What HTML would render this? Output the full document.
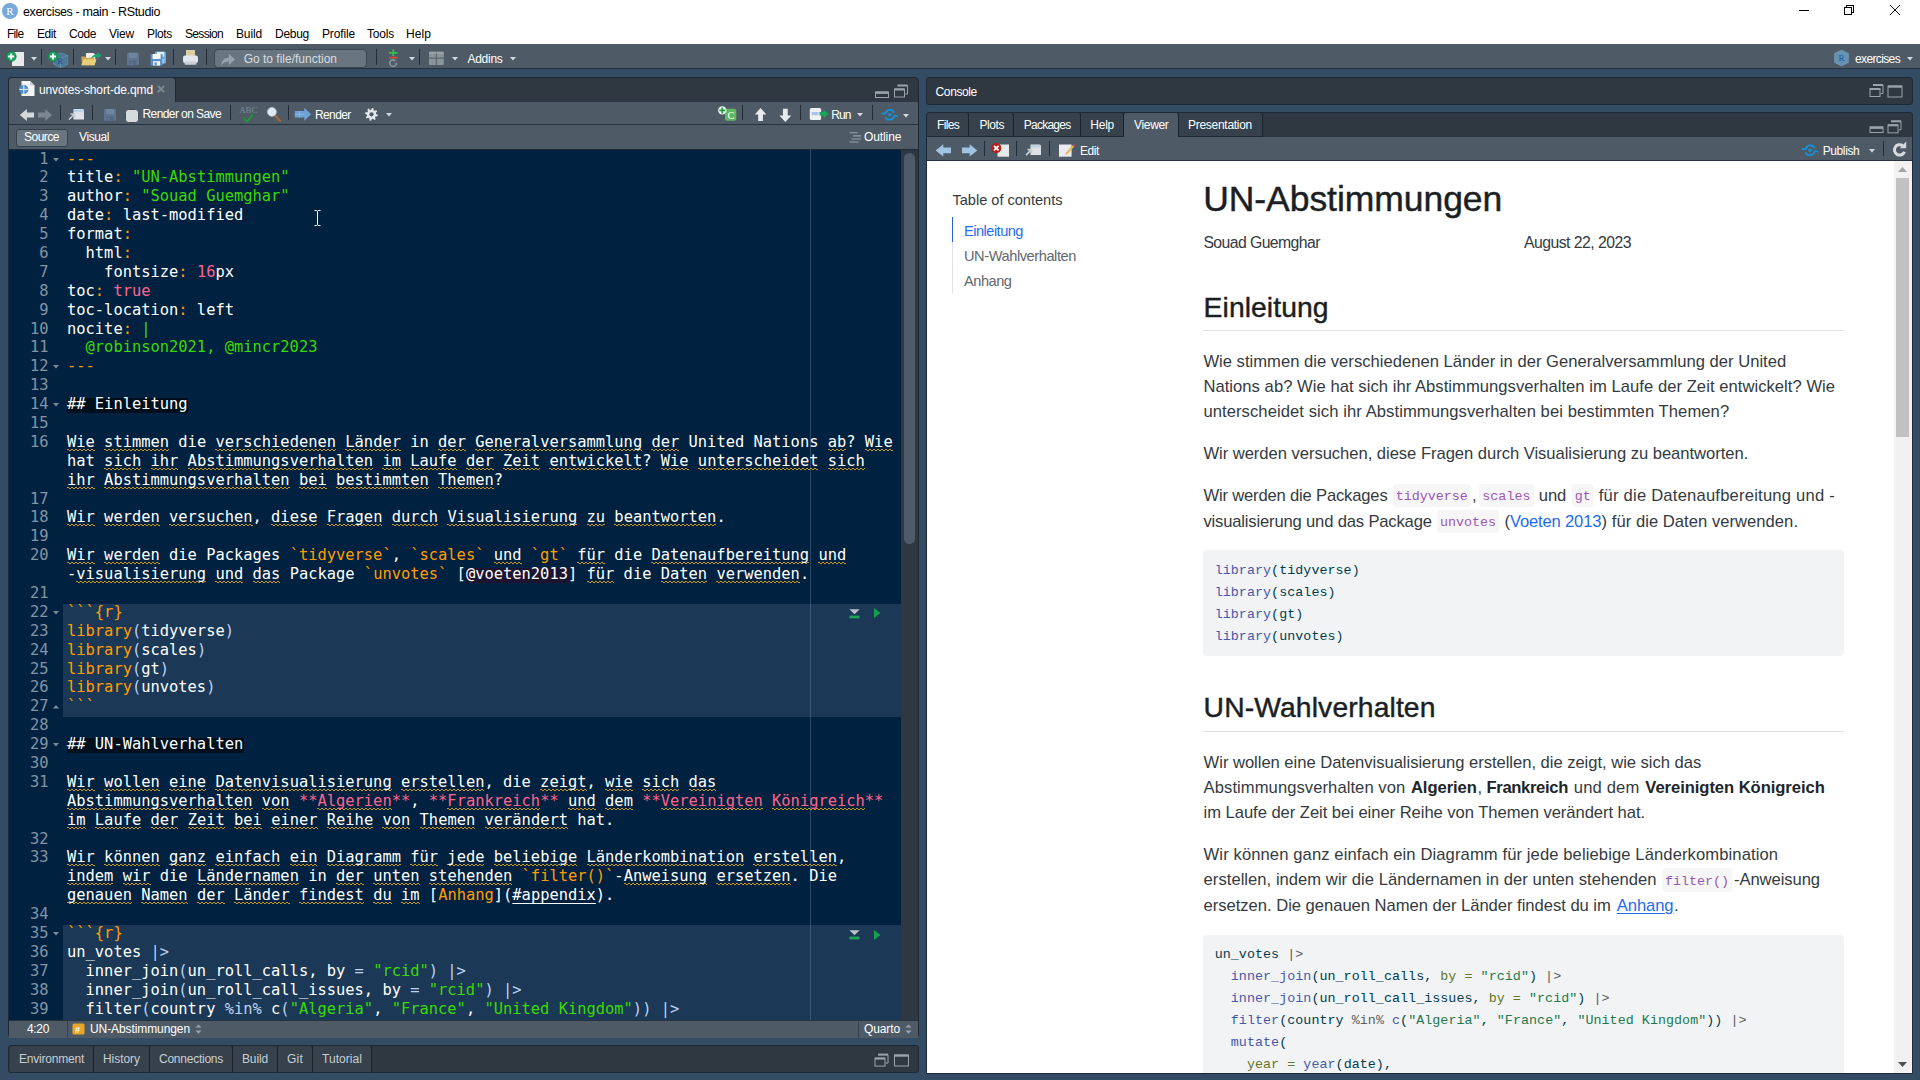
<!DOCTYPE html><html lang="de"><head><meta charset="utf-8"><title>exercises - main - RStudio</title><style>

html,body{margin:0;padding:0}
body{width:1920px;height:1080px;overflow:hidden;position:relative;background:#334b63;font-family:"Liberation Sans",sans-serif}
.a{position:absolute;box-sizing:border-box}
.t{position:absolute;white-space:pre;line-height:20px;height:20px}
.ui{font-family:"Liberation Sans",sans-serif}
.b{font-weight:bold}
.mono{font-family:"DejaVu Sans Mono","Liberation Mono",monospace}
svg{position:absolute;overflow:visible}


.thin{-webkit-text-stroke:0.35px #fff}
.h{-webkit-text-stroke:0.45px #1b1f24}
.pl{position:absolute;white-space:pre;font-size:16.6px;line-height:26px;height:26px;color:#343a40;font-family:"Liberation Sans",sans-serif}
.pl b{color:#212529}
.pl code{font-family:"Liberation Mono",monospace;font-size:13.35px;color:#9753b8;background:#f6f6f6;border-radius:4px;padding:3.5px 4px;letter-spacing:0}
.ic{font-family:"Liberation Mono",monospace;font-size:13.35px;color:#9c55b8;line-height:20px}
.lk{color:#2761e3}.u{text-decoration:underline;text-decoration-thickness:1px;text-underline-offset:2px}
.cl{position:absolute;left:1214.7px;white-space:pre;font-family:"Liberation Mono",monospace;font-size:13.35px;line-height:22px;height:22px;color:#003b4f;letter-spacing:0.05px}
.fn{color:#4758ab}.st{color:#20794d}.at{color:#657422}.opr{color:#5e5e5e}

.ed .row{position:absolute;left:67px;white-space:pre;font-size:15.414px;line-height:18.89px;height:18.89px;color:#fff}
.ed .ln{position:absolute;left:10px;width:38.5px;text-align:right;font-size:15.414px;line-height:18.89px;height:18.89px;color:#8494a4}
.w{color:#fff}.o{color:#ff9d00}.g{color:#3ad900}.p{color:#ff628c}.op{color:#bed2f0}
.hd{color:#fff}
.cite{color:#fff}
.lnk{text-decoration:underline;text-decoration-thickness:1px;text-underline-offset:3px}
.sp{background:linear-gradient(90deg,#c99a1e 0,#c99a1e 2px,transparent 2px,transparent 4px) 0 calc(100% - 1px)/4px 1px repeat-x,linear-gradient(90deg,transparent 0,transparent 2px,#c99a1e 2px,#c99a1e 4px) 0 100%/4px 1px repeat-x}

</style></head><body>
<div class="a " style="left:0px;top:0px;width:1920px;height:44px;background:#ffffff;"></div>
<div class="a" style="left:2px;top:3px;width:16px;height:16px;border-radius:8px;background:#75aadb"></div>
<span class="t ui " style="left:6.2px;top:1.2px;font-size:11px;color:#fff;font-family:'Liberation Serif',serif;">R</span>
<span class="t ui " style="left:23px;top:1.5px;font-size:12.5px;color:#000;letter-spacing:-0.368px;">exercises - main - RStudio</span>
<svg style="left:1790px;top:0" width="130" height="22" viewBox="0 0 130 22"><g stroke="#000" stroke-width="1" fill="none" shape-rendering="crispEdges"><path d="M9 10.5h10"/><path d="M54.5 7.5h7v7h-7z M56.5 7.5v-2h7v7h-2"/></g><path d="M100 5l10 10M110 5l-10 10" stroke="#000" stroke-width="0.95" fill="none"/></svg>
<span class="t ui " style="left:7px;top:23.5px;font-size:12px;color:#000;letter-spacing:-0.759px;">File</span>
<span class="t ui " style="left:37px;top:23.5px;font-size:12px;color:#000;letter-spacing:-0.419px;">Edit</span>
<span class="t ui " style="left:69px;top:23.5px;font-size:12px;color:#000;letter-spacing:-0.422px;">Code</span>
<span class="t ui " style="left:109px;top:23.5px;font-size:12px;color:#000;letter-spacing:-0.198px;">View</span>
<span class="t ui " style="left:147px;top:23.5px;font-size:12px;color:#000;letter-spacing:-0.336px;">Plots</span>
<span class="t ui " style="left:185px;top:23.5px;font-size:12px;color:#000;letter-spacing:-0.670px;">Session</span>
<span class="t ui " style="left:236px;top:23.5px;font-size:12px;color:#000;letter-spacing:-0.137px;">Build</span>
<span class="t ui " style="left:275px;top:23.5px;font-size:12px;color:#000;letter-spacing:-0.272px;">Debug</span>
<span class="t ui " style="left:322px;top:23.5px;font-size:12px;color:#000;letter-spacing:-0.145px;">Profile</span>
<span class="t ui " style="left:367px;top:23.5px;font-size:12px;color:#000;letter-spacing:-0.203px;">Tools</span>
<span class="t ui " style="left:406px;top:23.5px;font-size:12px;color:#000;letter-spacing:0.080px;">Help</span>
<div class="a " style="left:0px;top:44px;width:1920px;height:25px;background:#4e5b67;border-bottom:1px solid #26333f;"></div>
<div class="a " style="left:41px;top:49px;width:1.4px;height:16px;background:#222d37;"></div>
<div class="a " style="left:73px;top:49px;width:1.4px;height:16px;background:#222d37;"></div>
<div class="a " style="left:115px;top:49px;width:1.4px;height:16px;background:#222d37;"></div>
<div class="a " style="left:173px;top:49px;width:1.4px;height:16px;background:#222d37;"></div>
<div class="a " style="left:206px;top:49px;width:1.4px;height:16px;background:#222d37;"></div>
<div class="a " style="left:376px;top:49px;width:1.4px;height:16px;background:#222d37;"></div>
<div class="a " style="left:419px;top:49px;width:1.4px;height:16px;background:#222d37;"></div>
<svg style="left:31px;top:57.2px" width="6" height="3.4" viewBox="0 0 6 3.4"><path d="M0 0h6L3 3.4z" fill="#d4d9de"/></svg>
<svg style="left:105.2px;top:57.2px" width="6" height="3.4" viewBox="0 0 6 3.4"><path d="M0 0h6L3 3.4z" fill="#d4d9de"/></svg>
<svg style="left:409px;top:57.2px" width="6" height="3.4" viewBox="0 0 6 3.4"><path d="M0 0h6L3 3.4z" fill="#d4d9de"/></svg>
<svg style="left:451.7px;top:57.2px" width="6" height="3.4" viewBox="0 0 6 3.4"><path d="M0 0h6L3 3.4z" fill="#d4d9de"/></svg>
<svg style="left:509.5px;top:57.2px" width="6" height="3.4" viewBox="0 0 6 3.4"><path d="M0 0h6L3 3.4z" fill="#d4d9de"/></svg>
<div class="a" style="left:213.5px;top:49px;width:153px;height:18.6px;border-radius:4px;background:#69757f;border:1px solid #3a4650"></div>
<span class="t ui " style="left:243.7px;top:48.7px;font-size:12px;color:#d8dde2;letter-spacing:-0.005px;">Go to file/function</span>
<span class="t ui " style="left:467.5px;top:48.7px;font-size:12px;color:#fff;letter-spacing:-0.282px;">Addins</span>
<span class="t ui " style="left:1855px;top:48.7px;font-size:12px;color:#fff;letter-spacing:-0.632px;">exercises</span>
<svg style="left:1907px;top:57.2px" width="6" height="3.4" viewBox="0 0 6 3.4"><path d="M0 0h6L3 3.4z" fill="#d4d9de"/></svg>
<div class="a" style="left:8px;top:77px;width:911px;height:961px;background:#2f3841;border:1px solid #1c2a38;border-radius:4px"></div>
<div class="a" style="left:8px;top:77px;width:168px;height:25px;background:#4e5b67;border:1px solid #1c2a38;border-bottom:none;border-radius:4px 4px 0 0"></div>
<span class="t ui " style="left:39px;top:80px;font-size:12px;color:#fff;letter-spacing:-0.136px;">unvotes-short-de.qmd</span>
<span class="t ui " style="left:156.6px;top:79.3px;font-size:15px;color:#7e8a94;font-weight:bold;">×</span>
<div class="a " style="left:9px;top:102px;width:909px;height:23px;background:#4e5b67;border-bottom:1px solid #26333f;"></div>
<div class="a " style="left:60px;top:105px;width:1.4px;height:15px;background:#222d37;"></div>
<div class="a " style="left:92px;top:105px;width:1.4px;height:15px;background:#222d37;"></div>
<div class="a " style="left:230px;top:105px;width:1.4px;height:15px;background:#222d37;"></div>
<div class="a " style="left:288px;top:105px;width:1.4px;height:15px;background:#222d37;"></div>
<div class="a " style="left:742px;top:105px;width:1.4px;height:15px;background:#222d37;"></div>
<div class="a " style="left:800px;top:105px;width:1.4px;height:15px;background:#222d37;"></div>
<div class="a " style="left:872px;top:105px;width:1.4px;height:15px;background:#222d37;"></div>
<span class="t ui " style="left:142.5px;top:104px;font-size:12px;color:#fff;letter-spacing:-0.588px;">Render on Save</span>
<div class="a" style="left:125px;top:109.2px;width:13.6px;height:13.4px;border-radius:3.5px;background:#d5dade;border:1px solid #414d58"></div>
<span class="t ui " style="left:315px;top:104.8px;font-size:12px;color:#fff;letter-spacing:-0.626px;">Render</span>
<span class="t ui " style="left:831.3px;top:104.8px;font-size:12px;color:#fff;letter-spacing:-0.905px;">Run</span>
<svg style="left:386.4px;top:113.3px" width="6" height="3.4" viewBox="0 0 6 3.4"><path d="M0 0h6L3 3.4z" fill="#d4d9de"/></svg>
<svg style="left:857.4px;top:113.3px" width="6" height="3.4" viewBox="0 0 6 3.4"><path d="M0 0h6L3 3.4z" fill="#d4d9de"/></svg>
<svg style="left:903.3px;top:114.3px" width="6" height="3.4" viewBox="0 0 6 3.4"><path d="M0 0h6L3 3.4z" fill="#d4d9de"/></svg>
<div class="a " style="left:9px;top:125px;width:909px;height:24px;background:#4e5b67;"></div>
<div class="a" style="left:16px;top:129px;width:51.5px;height:17.5px;border-radius:3px;background:#69757f;border:1px solid #35414c"></div>
<span class="t ui " style="left:24px;top:127px;font-size:12px;color:#fff;letter-spacing:-0.504px;">Source</span>
<span class="t ui " style="left:79px;top:127px;font-size:12px;color:#fff;letter-spacing:-0.411px;">Visual</span>
<span class="t ui " style="left:864px;top:127px;font-size:12px;color:#fff;letter-spacing:-0.103px;">Outline</span>
<div class="a " style="left:9px;top:1020px;width:909px;height:18px;background:#4e5b67;border-top:1px solid #26333f;"></div>
<div class="a " style="left:67px;top:1021px;width:1.4px;height:17px;background:#35414c;"></div>
<div class="a " style="left:858px;top:1021px;width:1.4px;height:17px;background:#35414c;"></div>
<span class="t ui " style="left:27px;top:1019px;font-size:12px;color:#fff;letter-spacing:-0.339px;">4:20</span>
<span class="t ui " style="left:90px;top:1019px;font-size:12px;color:#fff;letter-spacing:-0.091px;">UN-Abstimmungen</span>
<span class="t ui " style="left:864px;top:1019px;font-size:12px;color:#fff;letter-spacing:-0.114px;">Quarto</span>
<div class="a" style="left:8px;top:1045px;width:911px;height:28px;background:#2f3841;border:1px solid #1c2a38;border-radius:3px"></div>
<div class="a" style="left:10px;top:1046px;width:84px;height:26px;background:#36414b;border-right:1px solid #1c2a38;border-radius:3px 3px 0 0"></div>
<span class="t ui " style="left:19px;top:1048.5px;font-size:12px;color:#c8ced4;letter-spacing:-0.215px;">Environment</span>
<div class="a" style="left:93px;top:1046px;width:57px;height:26px;background:#36414b;border-right:1px solid #1c2a38;border-radius:3px 3px 0 0"></div>
<span class="t ui " style="left:103px;top:1048.5px;font-size:12px;color:#c8ced4;letter-spacing:-0.048px;">History</span>
<div class="a" style="left:149px;top:1046px;width:84px;height:26px;background:#36414b;border-right:1px solid #1c2a38;border-radius:3px 3px 0 0"></div>
<span class="t ui " style="left:159px;top:1048.5px;font-size:12px;color:#c8ced4;letter-spacing:-0.246px;">Connections</span>
<div class="a" style="left:232px;top:1046px;width:46px;height:26px;background:#36414b;border-right:1px solid #1c2a38;border-radius:3px 3px 0 0"></div>
<span class="t ui " style="left:242px;top:1048.5px;font-size:12px;color:#c8ced4;letter-spacing:-0.137px;">Build</span>
<div class="a" style="left:277px;top:1046px;width:36px;height:26px;background:#36414b;border-right:1px solid #1c2a38;border-radius:3px 3px 0 0"></div>
<span class="t ui " style="left:287px;top:1048.5px;font-size:12px;color:#c8ced4;letter-spacing:0.222px;">Git</span>
<div class="a" style="left:312px;top:1046px;width:60px;height:26px;background:#36414b;border-right:1px solid #1c2a38;border-radius:3px 3px 0 0"></div>
<span class="t ui " style="left:322px;top:1048.5px;font-size:12px;color:#c8ced4;letter-spacing:0.054px;">Tutorial</span>
<div class="a " style="left:92.8px;top:1046px;width:1.7px;height:27px;background:#18232e;"></div>
<div class="a " style="left:148.8px;top:1046px;width:1.7px;height:27px;background:#18232e;"></div>
<div class="a " style="left:231.8px;top:1046px;width:1.7px;height:27px;background:#18232e;"></div>
<div class="a " style="left:276.8px;top:1046px;width:1.7px;height:27px;background:#18232e;"></div>
<div class="a " style="left:311.8px;top:1046px;width:1.7px;height:27px;background:#18232e;"></div>
<div class="a " style="left:370.8px;top:1046px;width:1.7px;height:27px;background:#18232e;"></div>
<div class="a" style="left:926px;top:77px;width:987px;height:28px;background:#2f3841;border:1px solid #1c2a38;border-radius:3px"></div>
<span class="t ui " style="left:935.6px;top:81.6px;font-size:12px;color:#fff;letter-spacing:-0.390px;">Console</span>
<div class="a" style="left:926px;top:112px;width:987px;height:962px;background:#2f3841;border:1px solid #1c2a38;border-radius:3px"></div>
<div class="a" style="left:927px;top:113px;width:42px;height:24px;background:#36414b;border-right:1px solid #1c2a38;border-bottom:1px solid #1c2a38;border-radius:3px 3px 0 0"></div>
<span class="t ui " style="left:937px;top:115px;font-size:12px;color:#fff;letter-spacing:-0.667px;">Files</span>
<div class="a" style="left:968px;top:113px;width:46px;height:24px;background:#36414b;border-right:1px solid #1c2a38;border-bottom:1px solid #1c2a38;border-radius:3px 3px 0 0"></div>
<span class="t ui " style="left:979.4px;top:115px;font-size:12px;color:#fff;letter-spacing:-0.416px;">Plots</span>
<div class="a" style="left:1013px;top:113px;width:68px;height:24px;background:#36414b;border-right:1px solid #1c2a38;border-bottom:1px solid #1c2a38;border-radius:3px 3px 0 0"></div>
<span class="t ui " style="left:1023.8px;top:115px;font-size:12px;color:#fff;letter-spacing:-0.762px;">Packages</span>
<div class="a" style="left:1080px;top:113px;width:44px;height:24px;background:#36414b;border-right:1px solid #1c2a38;border-bottom:1px solid #1c2a38;border-radius:3px 3px 0 0"></div>
<span class="t ui " style="left:1090.3px;top:115px;font-size:12px;color:#fff;letter-spacing:-0.245px;">Help</span>
<div class="a" style="left:1124px;top:113px;width:55px;height:24px;background:#4e5b67;border-right:1px solid #1c2a38;border-radius:3px 3px 0 0"></div>
<span class="t ui " style="left:1134px;top:115px;font-size:12px;color:#fff;letter-spacing:-0.327px;">Viewer</span>
<div class="a" style="left:1178px;top:113px;width:85px;height:24px;background:#36414b;border-right:1px solid #1c2a38;border-bottom:1px solid #1c2a38;border-radius:3px 3px 0 0"></div>
<span class="t ui " style="left:1188px;top:115px;font-size:12px;color:#fff;letter-spacing:-0.281px;">Presentation</span>
<div class="a " style="left:967.8px;top:114px;width:1.7px;height:23px;background:#18232e;"></div>
<div class="a " style="left:1012.8px;top:114px;width:1.7px;height:23px;background:#18232e;"></div>
<div class="a " style="left:1079.8px;top:114px;width:1.7px;height:23px;background:#18232e;"></div>
<div class="a " style="left:1122.8px;top:114px;width:1.7px;height:23px;background:#18232e;"></div>
<div class="a " style="left:1177.8px;top:114px;width:1.7px;height:23px;background:#18232e;"></div>
<div class="a " style="left:1261.8px;top:114px;width:1.7px;height:23px;background:#18232e;"></div>
<div class="a " style="left:927px;top:137px;width:985px;height:24px;background:#4e5b67;border-bottom:1px solid #26333f;"></div>
<div class="a " style="left:984px;top:141px;width:1.4px;height:15px;background:#222d37;"></div>
<div class="a " style="left:1016px;top:141px;width:1.4px;height:15px;background:#222d37;"></div>
<div class="a " style="left:1049px;top:141px;width:1.4px;height:15px;background:#222d37;"></div>
<div class="a " style="left:1883px;top:141px;width:1.4px;height:15px;background:#222d37;"></div>
<span class="t ui " style="left:1080px;top:140.8px;font-size:12px;color:#fff;letter-spacing:-0.419px;">Edit</span>
<span class="t ui " style="left:1822.7px;top:140.8px;font-size:12px;color:#fff;letter-spacing:-0.394px;">Publish</span>
<svg style="left:1869.3px;top:149.3px" width="6" height="3.4" viewBox="0 0 6 3.4"><path d="M0 0h6L3 3.4z" fill="#d4d9de"/></svg>
<svg style="left:0;top:0" width="1920" height="1080" viewBox="0 0 1920 1080"><rect x="12" y="52" width="12" height="14" fill="#e8eaec"/><circle cx="11.2" cy="56.5" r="5" fill="#18a05a" stroke="#0c7a42" stroke-width="0.6"/><path d="M8.2 56.5h6M11.2 53.5v6" stroke="#fff" stroke-width="2" fill="none"/><path d="M60.5 52.8l7.3 2.8v8.6l-7.3 3.3l-7-3.3v-8.6z" fill="#4b8db3" fill-opacity="0.6" stroke="#6fb0d0" stroke-opacity="0.6" stroke-width="0.7"/><path d="M53.5 55.6l7 2.9l7.3-2.9M60.5 58.5v9" stroke="#7fbbd8" stroke-opacity="0.6" stroke-width="0.6" fill="none"/><text x="57.6" y="64" font-family="Liberation Serif,serif" font-size="7.5" fill="#1b4b8f">R</text><circle cx="53" cy="56.5" r="5" fill="#18a05a" stroke="#0c7a42" stroke-width="0.6"/><path d="M50 56.5h6M53 53.5v6" stroke="#fff" stroke-width="2" fill="none"/><path d="M86 53h7.5l1.8 1.8v8h-9.3z" fill="#f0f0ee"/><path d="M81.2 56.5h4l1 1.3h8.3v7.4h-12.3z" fill="#c9a94b"/><path d="M83.5 59.2h13l-2 6h-13.3z" fill="#e7cf7a"/><path d="M91 58.5c1.5-3.6 4-4.6 6.4-4.3v-2.2l4 3.6l-4 3.6v-2.3c-2.2-.3-4 .2-6.4 1.6z" fill="#1aa875"/><rect x="127" y="52.8" width="12" height="12.4" rx="0.8" fill="#5f7690"/><rect x="129" y="52.8" width="8" height="5.208" fill="#70869d"/><rect x="129.5" y="60.488" width="7" height="4.712" fill="#56697f"/><rect x="131" y="61.728" width="2.2" height="3.472" fill="#5f7690"/><rect x="155" y="51.8" width="11" height="11.6" rx="0.8" fill="#6fb0dc"/><rect x="157" y="51.8" width="7" height="4.872" fill="#e6eef5"/><rect x="157.5" y="58.992" width="6" height="4.408" fill="#e6eef5"/><rect x="159" y="60.152" width="2.2" height="3.248" fill="#6fb0dc"/><rect x="150.6" y="54" width="12" height="11.6" rx="0.8" fill="#5b8fcb"/><rect x="152.6" y="54" width="8" height="4.872" fill="#ffffff"/><rect x="153.1" y="61.192" width="7" height="4.408" fill="#f2f5f8"/><rect x="154.6" y="62.352" width="2.2" height="3.248" fill="#5b8fcb"/><rect x="186" y="50" width="9" height="6.5" fill="#dccfa5"/><rect x="183" y="55.5" width="15" height="7.6" rx="2" fill="#e3e6ea"/><rect x="184.6" y="61.6" width="11.8" height="3.2" rx="0.8" fill="#c9cfd6"/><path d="M221.3 65.6c.4-5.2 3-8 7.6-8.2v-3.6l6.2 5.7l-6.2 5.6v-3.6c-3.4-.1-5.6 1.1-7.6 4.1z" fill="#97a1b0"/><path d="M389 52.8h8.5M393.2 49.6v6.4" stroke="#2fc24a" stroke-width="1.8"/><path d="M389 57.6h8.5" stroke="#d9463c" stroke-width="1.6"/><path d="M396.3 62.6a3.3 3.3 0 1 1 -2.3 -2.6" stroke="#8a949e" stroke-width="1.5" fill="none"/><path d="M393 58.6l2.8 1.4l-2 2.2z" fill="#8a949e"/><rect x="429" y="51.5" width="14.8" height="13.4" rx="1" fill="#8b939b"/><path d="M429 58.1h14.8M436.4 51.5v13.4" stroke="#5d6871" stroke-width="1.3"/><path d="M429 53h14.8" stroke="#a7aeb5" stroke-width="1"/><path d="M1841.5 50l7 3.4v9l-7 3.6l-7-3.6v-9z" fill="#6aa3c4" fill-opacity="0.8" stroke="#8fc0e0" stroke-opacity="0.5" stroke-width="0.6"/><path d="M1841.5 58v8" stroke="#4f8fb0" stroke-width="0.6"/><text x="1838.6" y="61" font-family="Liberation Serif,serif" font-size="9" fill="#1d5a9c">R</text><path d="M21.5 81h8.6l4.4 4.4v10.7h-13z" fill="#f4f5f6"/><path d="M30.1 81v4.4h4.4z" fill="#c9ced3"/><circle cx="23.8" cy="89.4" r="4.6" fill="#4f8fd0"/><path d="M19.2 89.4h9.2M23.8 84.8v9.2" stroke="#e8f0f8" stroke-width="1"/><path d="M19.8 115L26.9 109V112.4H34V117.6H26.9V121z" fill="#d5d9dd"/><path d="M52.2 115L45.1 109V112.4H38V117.6H45.1V121z" fill="#7b8690"/><path d="M73.5 109h9a1.5 1.5 0 0 1 1.5 1.5v9h-10.5z" fill="#dfe3e7"/><rect x="74" y="109.6" width="9.5" height="2.2" fill="#b9cfe6"/><path d="M69 119.5l5.5-5.5m-4 0h4v4" stroke="#c9ced4" stroke-width="1.6" fill="none"/><rect x="104" y="109" width="12" height="11.8" rx="0.8" fill="#5f7690"/><rect x="106" y="109" width="8" height="4.956" fill="#70869d"/><rect x="106.5" y="116.316" width="7" height="4.484" fill="#56697f"/><rect x="108" y="117.496" width="2.2" height="3.304" fill="#5f7690"/><text x="239.2" y="112.6" font-family="Liberation Serif,serif" font-size="8.2" fill="#7f8a94" textLength="18.2" lengthAdjust="spacingAndGlyphs">ABC</text><path d="M244 118.2l3 3.4l5.8-7" stroke="#1a9a3a" stroke-width="1.7" fill="none"/><path d="M275 115.2l5.2 5.8" stroke="#a8672f" stroke-width="2.2" stroke-linecap="round"/><circle cx="271.9" cy="111.9" r="4.4" fill="#dde9f3" stroke="#b8c6d2" stroke-width="0.9"/><path d="M294.8 111h9.5v-3.2l6.8 6.5l-6.8 6.5v-3.2h-9.5z" fill="#6fa0d6"/><path d="M294.8 114.3h9.5M299.5 111v6.6" stroke="#9fc0e6" stroke-width="0.6"/><path d="M377.88 114.79L377.58 116.29L375.60 116.38L374.99 117.30L375.67 119.16L374.39 120.01L372.93 118.67L371.85 118.89L371.01 120.68L369.51 120.38L369.42 118.40L368.50 117.79L366.64 118.47L365.79 117.19L367.13 115.73L366.91 114.65L365.12 113.81L365.42 112.31L367.40 112.22L368.01 111.30L367.33 109.44L368.61 108.59L370.07 109.93L371.15 109.71L371.99 107.92L373.49 108.22L373.58 110.20L374.50 110.81L376.36 110.13L377.21 111.41L375.87 112.87L376.09 113.95z" fill="#e4e7ea" fill-rule="evenodd"/><circle cx="371.5" cy="114.3" r="2.1" fill="#4e5b67"/><rect x="725" y="108.8" width="11.3" height="12" rx="2" fill="#5fb760"/><text x="727.6" y="118.8" font-family="Liberation Serif,serif" font-size="10.5" fill="#fff">C</text><circle cx="722.3" cy="110.4" r="4.2" fill="#f2f4f5"/><path d="M719.3 110.4h6M722.3 107.4v6" stroke="#1f9e3a" stroke-width="1.8"/><path d="M760.55 107.9L766.3 114.45H762.95V121H758.15V114.45H754.8z" fill="#e8eaec"/><path d="M785.35 122L791.3 115.4H787.75V108.8H782.95V115.4H779.4z" fill="#e8eaec"/><rect x="809.8" y="107.9" width="11.3" height="12.2" rx="1.5" fill="#eef0f2"/><rect x="811.5" y="112" width="7" height="3.2" fill="#a9c3ee"/><path d="M819.5 112h4v-2.6l5.2 4.4l-5.2 4.4v-2.6h-4z" fill="#18a558"/><g transform="translate(881.5 108.3)" fill="none" stroke="#1a8fd6" stroke-width="1.9" stroke-linecap="round"><path d="M0.8 5.2h3.2M4 5.2a4.6 4.6 0 0 1 8.4 -1.6"/><path d="M15.6 7.6h-2.6M12.6 7.6a4.6 4.6 0 0 1 -8.4 1.8"/><circle cx="8.3" cy="6.5" r="1.7" fill="#1a8fd6" stroke="none"/></g><path d="M849.5 132.8h8M853 135.9h8M851.5 139h9.5M849.5 142h9" stroke="#9aa3ab" stroke-width="1.1"/><path d="M853 138.4h8" stroke="#7d8790" stroke-width="0"/><rect x="875.5" y="92" width="13" height="5.5" stroke="#9aa3ab" stroke-width="1" fill="none"/><path d="M875.5 92.7h13" stroke="#9aa3ab" stroke-width="2.4"/><path d="M897.5 85.5h10v8.5h-2.2" stroke="#9aa3ab" stroke-width="1" fill="none"/><path d="M897.5 85.5h10" stroke="#9aa3ab" stroke-width="2"/><rect x="894.5" y="89" width="10" height="8" stroke="#9aa3ab" stroke-width="1" fill="#2f3841"/><path d="M894.5 89.5h10" stroke="#9aa3ab" stroke-width="2"/><path d="M1873 85h10v8.5h-2.2" stroke="#9aa3ab" stroke-width="1" fill="none"/><path d="M1873 85h10" stroke="#9aa3ab" stroke-width="2"/><rect x="1870" y="88.5" width="10" height="8" stroke="#9aa3ab" stroke-width="1" fill="#2f3841"/><path d="M1870 89h10" stroke="#9aa3ab" stroke-width="2"/><rect x="1888" y="86" width="14" height="11" stroke="#9aa3ab" stroke-width="1" fill="none"/><path d="M1888 86.6h14" stroke="#9aa3ab" stroke-width="2.2"/><rect x="1870" y="127" width="13" height="5.5" stroke="#9aa3ab" stroke-width="1" fill="none"/><path d="M1870 127.7h13" stroke="#9aa3ab" stroke-width="2.4"/><path d="M1891 121.3h10v8.5h-2.2" stroke="#9aa3ab" stroke-width="1" fill="none"/><path d="M1891 121.3h10" stroke="#9aa3ab" stroke-width="2"/><rect x="1888" y="124.8" width="10" height="8" stroke="#9aa3ab" stroke-width="1" fill="#2f3841"/><path d="M1888 125.3h10" stroke="#9aa3ab" stroke-width="2"/><path d="M878 1054.6h10v8.5h-2.2" stroke="#9aa3ab" stroke-width="1" fill="none"/><path d="M878 1054.6h10" stroke="#9aa3ab" stroke-width="2"/><rect x="875" y="1058.1" width="10" height="8" stroke="#9aa3ab" stroke-width="1" fill="#2f3841"/><path d="M875 1058.6h10" stroke="#9aa3ab" stroke-width="2"/><rect x="894.5" y="1055" width="14" height="11" stroke="#9aa3ab" stroke-width="1" fill="none"/><path d="M894.5 1055.6h14" stroke="#9aa3ab" stroke-width="2.2"/><rect x="72.5" y="1023.5" width="12" height="11" rx="1.5" fill="#e8a526"/><text x="75" y="1033" font-family="Liberation Sans,sans-serif" font-size="9" font-weight="bold" fill="#fff">#</text><path d="M195.5 1027.6l3-3.2l3 3.2zM195.5 1030.6l3 3.2l3-3.2z" fill="#9aa3ab"/><path d="M905.5 1027.6l3-3.2l3 3.2zM905.5 1030.6l3 3.2l3-3.2z" fill="#9aa3ab"/><path d="M935.6 150.4L943.3 144.2V147.6H951V153.2H943.3V156.6z" fill="#9fc3e0"/><path d="M977.3 150.4L969.65 144.2V147.6H962V153.2H969.65V156.6z" fill="#9fc3e0"/><rect x="997.5" y="144.5" width="11.5" height="12.2" fill="#e6e8ea"/><circle cx="996.3" cy="148.1" r="5" fill="#b5201d"/><path d="M994 145.8l4.6 4.6M998.6 145.8l-4.6 4.6" stroke="#fff" stroke-width="1.7"/><path d="M1030.5 144.6h9a1.5 1.5 0 0 1 1.5 1.5v9h-10.5z" fill="#dfe3e7"/><rect x="1031" y="145.2" width="9.5" height="2.2" fill="#b9cfe6"/><path d="M1026 155.1l5.5-5.5m-4 0h4v4" stroke="#c9ced4" stroke-width="1.6" fill="none"/><rect x="1059" y="144.5" width="12.6" height="12.2" fill="#e9ebed"/><path d="M1066 152.6l6.6-7.4l1.6 1.4l-6.6 7.4l-2.4 .9z" fill="#e2b85c"/><path d="M1072.6 145.2l1.6 1.4l1-1.2l-1.5-1.3z" fill="#d9463c"/><g transform="translate(1801.8 143.8)" fill="none" stroke="#1a8fd6" stroke-width="1.9" stroke-linecap="round"><path d="M0.8 5.2h3.2M4 5.2a4.6 4.6 0 0 1 8.4 -1.6"/><path d="M15.6 7.6h-2.6M12.6 7.6a4.6 4.6 0 0 1 -8.4 1.8"/><circle cx="8.3" cy="6.5" r="1.7" fill="#1a8fd6" stroke="none"/></g><path d="M1902.6 145.6a5.2 5.2 0 1 0 1.9 6.2" stroke="#d7dbdf" stroke-width="3" fill="none"/><path d="M1899.8 148.2h6.4v-6.6z" fill="#d7dbdf"/></svg>
<div class="a " style="left:9px;top:149px;width:892px;height:871px;background:#002240;"></div>
<div class="a " style="left:901px;top:149px;width:17px;height:871px;background:#2f3841;"></div>
<div class="a" style="left:904px;top:153px;width:11px;height:391px;border-radius:5.5px;background:#4f5b67"></div>
<div class="a " style="left:63px;top:604px;width:838px;height:113px;background:#1b3956;"></div>
<div class="a " style="left:63px;top:925px;width:838px;height:95px;background:#1b3956;"></div>
<div class="a " style="left:9px;top:149px;width:909px;height:1px;background:#1f2b37;"></div>
<div class="a " style="left:810px;top:149px;width:1px;height:871px;background:rgba(120,150,190,0.35);"></div>
<div class="a " style="left:67px;top:397.57px;width:121.14px;height:15.4px;background:#000f1e;"></div>
<div class="a " style="left:466.04px;top:567.58px;width:102.58px;height:15.4px;background:#1c1430;"></div>
<div class="a " style="left:67px;top:737.59px;width:176.82px;height:15.4px;background:#000f1e;"></div>
<div class="a mono ed" style="left:0;top:0;width:901px;height:1020px;overflow:hidden">
<span class="ln" style="top:149.50px">1</span>
<svg style="left:52.5px;top:157.55px" width="6" height="3.4" viewBox="0 0 6 3.4"><path d="M0 0h6L3 3.4z" fill="#7d8a97"/></svg>
<div class="row" style="top:149.50px"><span class="o">---</span></div>
<span class="ln" style="top:168.39px">2</span>
<div class="row" style="top:168.39px"><span class="w">title</span><span class="o">:</span><span class="w"> </span><span class="g">&quot;UN-Abstimmungen&quot;</span></div>
<span class="ln" style="top:187.28px">3</span>
<div class="row" style="top:187.28px"><span class="w">author</span><span class="o">:</span><span class="w"> </span><span class="g">&quot;Souad Guemghar&quot;</span></div>
<span class="ln" style="top:206.17px">4</span>
<div class="row" style="top:206.17px"><span class="w">date</span><span class="o">:</span><span class="w"> last-modified</span></div>
<span class="ln" style="top:225.06px">5</span>
<div class="row" style="top:225.06px"><span class="w">format</span><span class="o">:</span></div>
<span class="ln" style="top:243.95px">6</span>
<div class="row" style="top:243.95px"><span class="w">  html</span><span class="o">:</span></div>
<span class="ln" style="top:262.84px">7</span>
<div class="row" style="top:262.84px"><span class="w">    fontsize</span><span class="o">:</span><span class="w"> </span><span class="p">16</span><span class="w">px</span></div>
<span class="ln" style="top:281.73px">8</span>
<div class="row" style="top:281.73px"><span class="w">toc</span><span class="o">:</span><span class="w"> </span><span class="p">true</span></div>
<span class="ln" style="top:300.62px">9</span>
<div class="row" style="top:300.62px"><span class="w">toc-location</span><span class="o">:</span><span class="w"> left</span></div>
<span class="ln" style="top:319.51px">10</span>
<div class="row" style="top:319.51px"><span class="w">nocite</span><span class="o">:</span><span class="w"> </span><span class="g">|</span></div>
<span class="ln" style="top:338.40px">11</span>
<div class="row" style="top:338.40px"><span class="g">  @robinson2021, @mincr2023</span></div>
<span class="ln" style="top:357.29px">12</span>
<svg style="left:52.5px;top:365.34px" width="6" height="3.4" viewBox="0 0 6 3.4"><path d="M0 0h6L3 3.4z" fill="#7d8a97"/></svg>
<div class="row" style="top:357.29px"><span class="o">---</span></div>
<span class="ln" style="top:376.18px">13</span>
<span class="ln" style="top:395.07px">14</span>
<svg style="left:52.5px;top:403.12px" width="6" height="3.4" viewBox="0 0 6 3.4"><path d="M0 0h6L3 3.4z" fill="#7d8a97"/></svg>
<div class="row" style="top:395.07px"><span class="hd">## Einleitung</span></div>
<span class="ln" style="top:413.96px">15</span>
<span class="ln" style="top:432.85px">16</span>
<div class="row" style="top:432.85px"><span class="w sp">Wie</span><span class="w"> </span><span class="w sp">stimmen</span><span class="w"> </span><span class="w">die</span><span class="w"> </span><span class="w sp">verschiedenen</span><span class="w"> </span><span class="w sp">Länder</span><span class="w"> </span><span class="w">in</span><span class="w"> </span><span class="w sp">der</span><span class="w"> </span><span class="w sp">Generalversammlung</span><span class="w"> </span><span class="w sp">der</span><span class="w"> </span><span class="w">United</span><span class="w"> </span><span class="w">Nations</span><span class="w"> </span><span class="w sp">ab</span><span class="w">? </span><span class="w sp">Wie</span></div>
<div class="row" style="top:451.74px"><span class="w">hat</span><span class="w"> </span><span class="w sp">sich</span><span class="w"> </span><span class="w sp">ihr</span><span class="w"> </span><span class="w sp">Abstimmungsverhalten</span><span class="w"> </span><span class="w sp">im</span><span class="w"> </span><span class="w sp">Laufe</span><span class="w"> </span><span class="w sp">der</span><span class="w"> </span><span class="w sp">Zeit</span><span class="w"> </span><span class="w sp">entwickelt</span><span class="w">? </span><span class="w sp">Wie</span><span class="w"> </span><span class="w sp">unterscheidet</span><span class="w"> </span><span class="w sp">sich</span></div>
<div class="row" style="top:470.63px"><span class="w sp">ihr</span><span class="w"> </span><span class="w sp">Abstimmungsverhalten</span><span class="w"> </span><span class="w sp">bei</span><span class="w"> </span><span class="w sp">bestimmten</span><span class="w"> </span><span class="w sp">Themen</span><span class="w">?</span></div>
<span class="ln" style="top:489.52px">17</span>
<span class="ln" style="top:508.41px">18</span>
<div class="row" style="top:508.41px"><span class="w sp">Wir</span><span class="w"> </span><span class="w sp">werden</span><span class="w"> </span><span class="w sp">versuchen</span><span class="w">, </span><span class="w sp">diese</span><span class="w"> </span><span class="w sp">Fragen</span><span class="w"> </span><span class="w sp">durch</span><span class="w"> </span><span class="w sp">Visualisierung</span><span class="w"> </span><span class="w sp">zu</span><span class="w"> </span><span class="w sp">beantworten</span><span class="w">.</span></div>
<span class="ln" style="top:527.30px">19</span>
<span class="ln" style="top:546.19px">20</span>
<div class="row" style="top:546.19px"><span class="w sp">Wir</span><span class="w"> </span><span class="w sp">werden</span><span class="w"> </span><span class="w">die</span><span class="w"> </span><span class="w">Packages</span><span class="w"> </span><span class="o">`tidyverse`</span><span class="w">, </span><span class="o">`scales`</span><span class="w"> </span><span class="w sp">und</span><span class="w"> </span><span class="o">`gt`</span><span class="w"> </span><span class="w sp">für</span><span class="w"> </span><span class="w">die</span><span class="w"> </span><span class="w sp">Datenaufbereitung</span><span class="w"> </span><span class="w sp">und</span></div>
<div class="row" style="top:565.08px"><span class="w">-</span><span class="w sp">visualisierung</span><span class="w"> </span><span class="w sp">und</span><span class="w"> </span><span class="w sp">das</span><span class="w"> </span><span class="w">Package</span><span class="w"> </span><span class="o">`unvotes`</span><span class="w"> [</span><span class="cite">@voeten2013</span><span class="w">]</span><span class="w"> </span><span class="w sp">für</span><span class="w"> </span><span class="w">die</span><span class="w"> </span><span class="w sp">Daten</span><span class="w"> </span><span class="w sp">verwenden</span><span class="w">.</span></div>
<span class="ln" style="top:583.97px">21</span>
<span class="ln" style="top:602.86px">22</span>
<svg style="left:52.5px;top:610.91px" width="6" height="3.4" viewBox="0 0 6 3.4"><path d="M0 0h6L3 3.4z" fill="#7d8a97"/></svg>
<div class="row" style="top:602.86px"><span class="o">```{r}</span></div>
<span class="ln" style="top:621.75px">23</span>
<div class="row" style="top:621.75px"><span class="o">library</span><span class="op">(</span><span class="w">tidyverse</span><span class="op">)</span></div>
<span class="ln" style="top:640.64px">24</span>
<div class="row" style="top:640.64px"><span class="o">library</span><span class="op">(</span><span class="w">scales</span><span class="op">)</span></div>
<span class="ln" style="top:659.53px">25</span>
<div class="row" style="top:659.53px"><span class="o">library</span><span class="op">(</span><span class="w">gt</span><span class="op">)</span></div>
<span class="ln" style="top:678.42px">26</span>
<div class="row" style="top:678.42px"><span class="o">library</span><span class="op">(</span><span class="w">unvotes</span><span class="op">)</span></div>
<span class="ln" style="top:697.31px">27</span>
<svg style="left:52.5px;top:705.36px" width="6" height="3.4" viewBox="0 0 6 3.4"><path d="M0 3.4h6L3 0z" fill="#7d8a97"/></svg>
<div class="row" style="top:697.31px"><span class="o">```</span></div>
<span class="ln" style="top:716.20px">28</span>
<span class="ln" style="top:735.09px">29</span>
<svg style="left:52.5px;top:743.14px" width="6" height="3.4" viewBox="0 0 6 3.4"><path d="M0 0h6L3 3.4z" fill="#7d8a97"/></svg>
<div class="row" style="top:735.09px"><span class="hd">## UN-Wahlverhalten</span></div>
<span class="ln" style="top:753.98px">30</span>
<span class="ln" style="top:772.87px">31</span>
<div class="row" style="top:772.87px"><span class="w sp">Wir</span><span class="w"> </span><span class="w sp">wollen</span><span class="w"> </span><span class="w sp">eine</span><span class="w"> </span><span class="w sp">Datenvisualisierung</span><span class="w"> </span><span class="w sp">erstellen</span><span class="w">, </span><span class="w">die</span><span class="w"> </span><span class="w sp">zeigt</span><span class="w">, </span><span class="w sp">wie</span><span class="w"> </span><span class="w sp">sich</span><span class="w"> </span><span class="w sp">das</span></div>
<div class="row" style="top:791.76px"><span class="w sp">Abstimmungsverhalten</span><span class="w"> </span><span class="w sp">von</span><span class="w"> </span><span class="p">**</span><span class="p sp">Algerien</span><span class="p">**</span><span class="w">, </span><span class="p">**</span><span class="p sp">Frankreich</span><span class="p">**</span><span class="w"> </span><span class="w sp">und</span><span class="w"> </span><span class="w sp">dem</span><span class="w"> </span><span class="p">**</span><span class="p sp">Vereinigten</span><span class="p"> </span><span class="p sp">Königreich</span><span class="p">**</span></div>
<div class="row" style="top:810.65px"><span class="w sp">im</span><span class="w"> </span><span class="w sp">Laufe</span><span class="w"> </span><span class="w sp">der</span><span class="w"> </span><span class="w sp">Zeit</span><span class="w"> </span><span class="w sp">bei</span><span class="w"> </span><span class="w sp">einer</span><span class="w"> </span><span class="w sp">Reihe</span><span class="w"> </span><span class="w sp">von</span><span class="w"> </span><span class="w sp">Themen</span><span class="w"> </span><span class="w sp">verändert</span><span class="w"> </span><span class="w">hat</span><span class="w">.</span></div>
<span class="ln" style="top:829.54px">32</span>
<span class="ln" style="top:848.43px">33</span>
<div class="row" style="top:848.43px"><span class="w sp">Wir</span><span class="w"> </span><span class="w sp">können</span><span class="w"> </span><span class="w sp">ganz</span><span class="w"> </span><span class="w sp">einfach</span><span class="w"> </span><span class="w sp">ein</span><span class="w"> </span><span class="w sp">Diagramm</span><span class="w"> </span><span class="w sp">für</span><span class="w"> </span><span class="w sp">jede</span><span class="w"> </span><span class="w sp">beliebige</span><span class="w"> </span><span class="w sp">Länderkombination</span><span class="w"> </span><span class="w sp">erstellen</span><span class="w">,</span></div>
<div class="row" style="top:867.32px"><span class="w sp">indem</span><span class="w"> </span><span class="w sp">wir</span><span class="w"> </span><span class="w">die</span><span class="w"> </span><span class="w sp">Ländernamen</span><span class="w"> </span><span class="w">in</span><span class="w"> </span><span class="w sp">der</span><span class="w"> </span><span class="w sp">unten</span><span class="w"> </span><span class="w sp">stehenden</span><span class="w"> </span><span class="o">`filter()`</span><span class="w">-</span><span class="w sp">Anweisung</span><span class="w"> </span><span class="w sp">ersetzen</span><span class="w">. </span><span class="w">Die</span></div>
<div class="row" style="top:886.21px"><span class="w sp">genauen</span><span class="w"> </span><span class="w sp">Namen</span><span class="w"> </span><span class="w sp">der</span><span class="w"> </span><span class="w sp">Länder</span><span class="w"> </span><span class="w sp">findest</span><span class="w"> </span><span class="w sp">du</span><span class="w"> </span><span class="w sp">im</span><span class="w"> </span><span class="w">[</span><span class="o">Anhang</span><span class="w">](</span><span class="lnk">#appendix</span><span class="w">).</span></div>
<span class="ln" style="top:905.10px">34</span>
<span class="ln" style="top:923.99px">35</span>
<svg style="left:52.5px;top:932.03px" width="6" height="3.4" viewBox="0 0 6 3.4"><path d="M0 0h6L3 3.4z" fill="#7d8a97"/></svg>
<div class="row" style="top:923.99px"><span class="o">```{r}</span></div>
<span class="ln" style="top:942.88px">36</span>
<div class="row" style="top:942.88px"><span class="w">un_votes </span><span class="op">|&gt;</span></div>
<span class="ln" style="top:961.77px">37</span>
<div class="row" style="top:961.77px"><span class="w">  inner_join</span><span class="op">(</span><span class="w">un_roll_calls, by </span><span class="op">=</span><span class="w"> </span><span class="g">&quot;rcid&quot;</span><span class="op">)</span><span class="w"> </span><span class="op">|&gt;</span></div>
<span class="ln" style="top:980.66px">38</span>
<div class="row" style="top:980.66px"><span class="w">  inner_join</span><span class="op">(</span><span class="w">un_roll_call_issues, by </span><span class="op">=</span><span class="w"> </span><span class="g">&quot;rcid&quot;</span><span class="op">)</span><span class="w"> </span><span class="op">|&gt;</span></div>
<span class="ln" style="top:999.55px">39</span>
<div class="row" style="top:999.55px"><span class="w">  filter</span><span class="op">(</span><span class="w">country </span><span class="op">%in%</span><span class="w"> c</span><span class="op">(</span><span class="g">&quot;Algeria&quot;</span><span class="w">, </span><span class="g">&quot;France&quot;</span><span class="w">, </span><span class="g">&quot;United Kingdom&quot;</span><span class="op">)</span><span class="op">)</span><span class="w"> </span><span class="op">|&gt;</span></div>
</div>
<svg style="left:849px;top:607.91px" width="12" height="11" viewBox="0 0 12 11"><path d="M0.3 1.2h10.4L5.5 6.2z" fill="#b9c0c7"/><rect x="0.5" y="7.6" width="10" height="2.8" fill="#1fa35c"/></svg>
<svg style="left:874px;top:608.41px" width="7" height="10" viewBox="0 0 7 10"><path d="M0 0L6.5 5L0 10z" fill="#14a04f"/></svg>
<svg style="left:849px;top:929.03px" width="12" height="11" viewBox="0 0 12 11"><path d="M0.3 1.2h10.4L5.5 6.2z" fill="#b9c0c7"/><rect x="0.5" y="7.6" width="10" height="2.8" fill="#1fa35c"/></svg>
<svg style="left:874px;top:929.53px" width="7" height="10" viewBox="0 0 7 10"><path d="M0 0L6.5 5L0 10z" fill="#14a04f"/></svg>
<svg style="left:314px;top:210px" width="7" height="16" viewBox="0 0 7 16"><path d="M0.5 0.5h2.2l0.8 0.8l0.8-0.8h2.2M3.5 1v14M0.5 15.5h2.2l0.8-0.8l0.8 0.8h2.2" stroke="#fff" stroke-width="1" fill="none"/></svg>
<div class="a " style="left:927px;top:161px;width:985px;height:912px;background:#fff;"></div>
<div class="a " style="left:1894px;top:161px;width:18px;height:912px;background:#f1f1f1;"></div>
<div class="a " style="left:1896px;top:178px;width:13px;height:259px;background:#c1c1c1;"></div>
<svg style="left:1898px;top:167px" width="9" height="5" viewBox="0 0 9 5"><path d="M0 5h9L4.5 0z" fill="#a3a3a3"/></svg>
<svg style="left:1898px;top:1062px" width="9" height="5" viewBox="0 0 9 5"><path d="M0 0h9L4.5 5z" fill="#505050"/></svg>
<span class="t ui " style="left:952.5px;top:190px;font-size:14.6px;color:#343a40;letter-spacing:-0.023px;">Table of contents</span>
<div class="a " style="left:952px;top:217px;width:1px;height:76px;background:#dee2e6;"></div>
<div class="a " style="left:952px;top:217px;width:1px;height:25px;background:#2761e3;"></div>
<span class="t ui " style="left:964px;top:221px;font-size:14.6px;color:#2a6cf0;letter-spacing:-0.513px;">Einleitung</span>
<span class="t ui " style="left:964px;top:246px;font-size:14.6px;color:#62686e;letter-spacing:-0.421px;">UN-Wahlverhalten</span>
<span class="t ui " style="left:964px;top:271px;font-size:14.6px;color:#62686e;letter-spacing:-0.473px;">Anhang</span>
<span class="t ui h" style="left:1203.2px;top:189.3px;font-size:35.5px;color:#1b1f24;letter-spacing:-0.059px;line-height:44px;height:44px;margin-top:-12px;">UN-Abstimmungen</span>
<span class="t ui " style="left:1203.4px;top:233px;font-size:15.8px;color:#343a40;letter-spacing:-0.588px;">Souad Guemghar</span>
<span class="t ui " style="left:1524px;top:233px;font-size:15.8px;color:#343a40;letter-spacing:-0.539px;">August 22, 2023</span>
<span class="t ui h" style="left:1203.6px;top:297px;font-size:28.3px;color:#1b1f24;letter-spacing:0.070px;line-height:36px;height:36px;margin-top:-8px;">Einleitung</span>
<div class="a " style="left:1203px;top:330px;width:641px;height:1px;background:#dee2e6;"></div>
<span class="t ui h" style="left:1203.6px;top:697px;font-size:28.3px;color:#1b1f24;letter-spacing:0.116px;line-height:36px;height:36px;margin-top:-8px;">UN-Wahlverhalten</span>
<div class="a " style="left:1203px;top:731px;width:641px;height:1px;background:#dee2e6;"></div>
<span class="t ui " style="left:1203.4px;top:351.8px;font-size:16.6px;color:#343a40;letter-spacing:0.011px;line-height:26px;height:26px;margin-top:-3px;">Wie stimmen die verschiedenen Länder in der Generalversammlung der United</span>
<span class="t ui " style="left:1203.4px;top:376.8px;font-size:16.6px;color:#343a40;letter-spacing:0.044px;line-height:26px;height:26px;margin-top:-3px;">Nations ab? Wie hat sich ihr Abstimmungsverhalten im Laufe der Zeit entwickelt? Wie</span>
<span class="t ui " style="left:1203.4px;top:401.8px;font-size:16.6px;color:#343a40;letter-spacing:0.076px;line-height:26px;height:26px;margin-top:-3px;">unterscheidet sich ihr Abstimmungsverhalten bei bestimmten Themen?</span>
<span class="t ui " style="left:1203.4px;top:443.8px;font-size:16.6px;color:#343a40;letter-spacing:-0.039px;line-height:26px;height:26px;margin-top:-3px;">Wir werden versuchen, diese Fragen durch Visualisierung zu beantworten.</span>
<span class="t ui " style="left:1203.4px;top:485.8px;font-size:16.6px;color:#343a40;letter-spacing:-0.175px;line-height:26px;height:26px;margin-top:-3px;">Wir werden die Packages</span>
<div class="a" style="left:1393.1px;top:483.8px;width:77.5px;height:23.5px;background:#f6f6f7;border-radius:4px"></div>
<span class="t ic" style="left:1395.8px;top:487.1px">tidyverse</span>
<span class="t ui " style="left:1471.9px;top:485.8px;font-size:16.6px;color:#343a40;letter-spacing:-1.112px;line-height:26px;height:26px;margin-top:-3px;">,</span>
<div class="a" style="left:1479px;top:483.8px;width:54.8px;height:23.5px;background:#f6f6f7;border-radius:4px"></div>
<span class="t ic" style="left:1482.37px;top:487.1px">scales</span>
<span class="t ui " style="left:1538.8px;top:485.8px;font-size:16.6px;color:#343a40;letter-spacing:-0.066px;line-height:26px;height:26px;margin-top:-3px;">und</span>
<div class="a" style="left:1571.9px;top:483.8px;width:21.9px;height:23.5px;background:#f6f6f7;border-radius:4px"></div>
<span class="t ic" style="left:1574.84px;top:487.1px">gt</span>
<span class="t ui " style="left:1598.8px;top:485.8px;font-size:16.6px;color:#343a40;letter-spacing:0.207px;line-height:26px;height:26px;margin-top:-3px;">für die Datenaufbereitung und -</span>
<span class="t ui " style="left:1203.4px;top:511.8px;font-size:16.6px;color:#343a40;letter-spacing:-0.166px;line-height:26px;height:26px;margin-top:-3px;">visualisierung und das Package</span>
<div class="a" style="left:1437.3px;top:509.6px;width:61.5px;height:23.5px;background:#f6f6f7;border-radius:4px"></div>
<span class="t ic" style="left:1440.01px;top:512.9px">unvotes</span>
<span class="t ui " style="left:1504.4px;top:511.8px;font-size:16.6px;color:#343a40;line-height:26px;height:26px;margin-top:-3px;">(</span>
<span class="t ui " style="left:1510px;top:511.8px;font-size:16.6px;color:#1f6cf0;letter-spacing:-0.176px;line-height:26px;height:26px;margin-top:-3px;">Voeten 2013</span>
<span class="t ui " style="left:1601.6px;top:511.8px;font-size:16.6px;color:#343a40;letter-spacing:0.034px;line-height:26px;height:26px;margin-top:-3px;">) für die Daten verwenden.</span>
<span class="t ui " style="left:1203.6px;top:753.3px;font-size:16.6px;color:#343a40;letter-spacing:-0.033px;line-height:26px;height:26px;margin-top:-3px;">Wir wollen eine Datenvisualisierung erstellen, die zeigt, wie sich das</span>
<span class="t ui " style="left:1203.6px;top:778.3px;font-size:16.6px;color:#343a40;letter-spacing:0.066px;line-height:26px;height:26px;margin-top:-3px;">Abstimmungsverhalten von</span>
<span class="t ui b " style="left:1410.9px;top:778.3px;font-size:16.6px;color:#212529;letter-spacing:-0.052px;line-height:26px;height:26px;margin-top:-3px;">Algerien</span>
<span class="t ui " style="left:1477.6px;top:778.3px;font-size:16.6px;color:#343a40;line-height:26px;height:26px;margin-top:-3px;">,</span>
<span class="t ui b " style="left:1486.5px;top:778.3px;font-size:16.6px;color:#212529;letter-spacing:-0.338px;line-height:26px;height:26px;margin-top:-3px;">Frankreich</span>
<span class="t ui " style="left:1573.8px;top:778.3px;font-size:16.6px;color:#343a40;letter-spacing:0.157px;line-height:26px;height:26px;margin-top:-3px;">und dem</span>
<span class="t ui b " style="left:1645.3px;top:778.3px;font-size:16.6px;color:#212529;letter-spacing:-0.059px;line-height:26px;height:26px;margin-top:-3px;">Vereinigten Königreich</span>
<span class="t ui " style="left:1203.6px;top:803.3px;font-size:16.6px;color:#343a40;letter-spacing:-0.047px;line-height:26px;height:26px;margin-top:-3px;">im Laufe der Zeit bei einer Reihe von Themen verändert hat.</span>
<span class="t ui " style="left:1203.6px;top:844.8px;font-size:16.6px;color:#343a40;letter-spacing:0.100px;line-height:26px;height:26px;margin-top:-3px;">Wir können ganz einfach ein Diagramm für jede beliebige Länderkombination</span>
<span class="t ui " style="left:1203.6px;top:870.3px;font-size:16.6px;color:#343a40;letter-spacing:0.031px;line-height:26px;height:26px;margin-top:-3px;">erstellen, indem wir die Ländernamen in der unten stehenden</span>
<div class="a" style="left:1661.8px;top:868.3px;width:70.5px;height:23.5px;background:#f6f6f7;border-radius:4px"></div>
<span class="t ic" style="left:1665.01px;top:871.6px">filter()</span>
<span class="t ui " style="left:1734px;top:870.3px;font-size:16.6px;color:#343a40;letter-spacing:-0.074px;line-height:26px;height:26px;margin-top:-3px;">-Anweisung</span>
<span class="t ui " style="left:1203.6px;top:895.8px;font-size:16.6px;color:#343a40;letter-spacing:-0.027px;line-height:26px;height:26px;margin-top:-3px;">ersetzen. Die genauen Namen der Länder findest du im</span>
<span class="t ui u" style="left:1616.8px;top:895.8px;font-size:16.6px;color:#1f6cf0;letter-spacing:-0.089px;line-height:26px;height:26px;margin-top:-3px;">Anhang</span>
<span class="t ui " style="left:1674px;top:895.8px;font-size:16.6px;color:#343a40;line-height:26px;height:26px;margin-top:-3px;">.</span>
<div class="a" style="left:1203px;top:550px;width:641px;height:105.5px;background:#f1f3f5;border-radius:4px"></div>
<div class="cl" style="top:560.00px"><span class="fn">library</span>(tidyverse)</div>
<div class="cl" style="top:581.95px"><span class="fn">library</span>(scales)</div>
<div class="cl" style="top:603.90px"><span class="fn">library</span>(gt)</div>
<div class="cl" style="top:625.85px"><span class="fn">library</span>(unvotes)</div>
<div class="a" style="left:1203px;top:934.5px;width:641px;height:160px;background:#f1f3f5;border-radius:4px"></div>
<div class="cl" style="top:943.50px">un_votes <span class="opr">|&gt;</span></div>
<div class="cl" style="top:965.50px">  <span class="fn">inner_join</span>(un_roll_calls, <span class="at">by =</span> <span class="st">&quot;rcid&quot;</span>) <span class="opr">|&gt;</span></div>
<div class="cl" style="top:987.50px">  <span class="fn">inner_join</span>(un_roll_call_issues, <span class="at">by =</span> <span class="st">&quot;rcid&quot;</span>) <span class="opr">|&gt;</span></div>
<div class="cl" style="top:1009.50px">  <span class="fn">filter</span>(country <span class="opr">%in%</span> <span class="fn">c</span>(<span class="st">&quot;Algeria&quot;</span>, <span class="st">&quot;France&quot;</span>, <span class="st">&quot;United Kingdom&quot;</span>)) <span class="opr">|&gt;</span></div>
<div class="cl" style="top:1031.50px">  <span class="fn">mutate</span>(</div>
<div class="cl" style="top:1053.50px">    <span class="at">year =</span> <span class="fn">year</span>(date),</div>
<div class="a " style="left:926px;top:1073px;width:987px;height:7px;background:#334b63;"></div>
<div class="a " style="left:926px;top:1073px;width:987px;height:1px;background:#1c2a38;"></div>
</body></html>
